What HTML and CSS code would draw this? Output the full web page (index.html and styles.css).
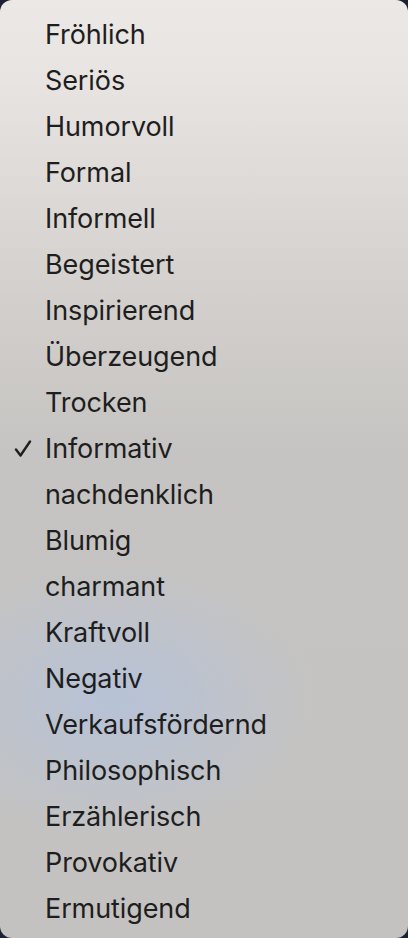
FILE: index.html
```html
<!DOCTYPE html>
<html>
<head>
    <meta charset="utf-8">
    <title>Tonfall</title>
    <link rel="stylesheet" href="styles.css">
</head>
<body>
    <ul class="menu">
        <li>Fröhlich</li>
        <li>Seriös</li>
        <li>Humorvoll</li>
        <li>Formal</li>
        <li>Informell</li>
        <li>Begeistert</li>
        <li>Inspirierend</li>
        <li>Überzeugend</li>
        <li>Trocken</li>
        <li class="checked">
            <svg class="check" width="18" height="18" viewBox="0 0 18 18"><path d="M2 9.5 L6.5 15.5 L16 1.5" fill="none" stroke="#1f1f1f" stroke-width="2.4" stroke-linecap="round" stroke-linejoin="round"/></svg>
            Informativ
        </li>
        <li>nachdenklich</li>
        <li>Blumig</li>
        <li>charmant</li>
        <li>Kraftvoll</li>
        <li>Negativ</li>
        <li>Verkaufsfördernd</li>
        <li>Philosophisch</li>
        <li>Erzählerisch</li>
        <li>Provokativ</li>
        <li>Ermutigend</li>
    </ul>
</body>
</html>
```

FILE: styles.css
```css
html, body {margin: 0; padding: 0; background: #1b2233;}
body {width: 408px; height: 938px; overflow: hidden;}

.menu {
    list-style: none;
    margin: 0;
    padding: 12px 0 0 0;
    height: 938px;
    box-sizing: border-box;
    border-radius: 12px;
    background:
        radial-gradient(ellipse 200px 140px at 115px 700px, rgba(178,194,222,0.75), rgba(178,194,222,0) 100%),
        linear-gradient(180deg, #ece8e5 0px, #e8e4e1 80px, #d2cfcc 300px, #c6c4c2 450px, #c3c2c1 938px);
    font-family: Inter, "Noto Sans", sans-serif;
    font-size: 27px;
    letter-spacing: -0.1px;
    color: #1e1e1e;
}
.menu li {
    position: relative;
    height: 46px;
    line-height: 46px;
    padding-left: 45px;
}
.menu .check {
    position: absolute;
    left: 14px;
    top: 14px;
}
```
